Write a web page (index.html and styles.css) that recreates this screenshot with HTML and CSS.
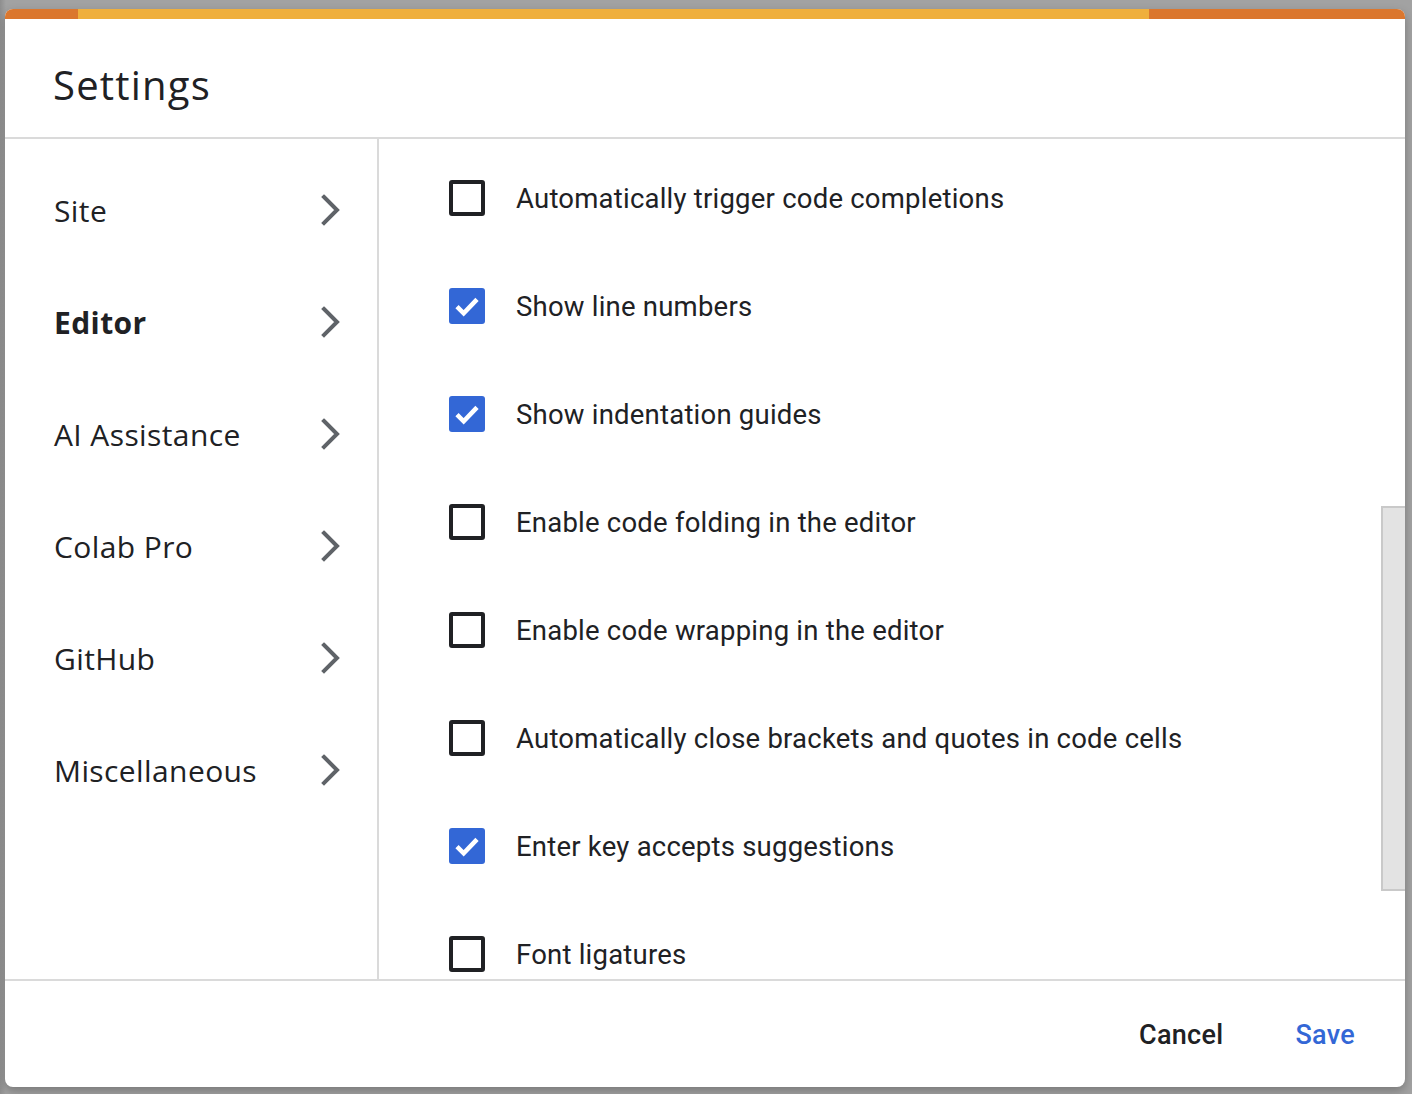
FILE: index.html
```html
<!DOCTYPE html>
<html lang="en">
<head>
<meta charset="utf-8">
<title>Settings</title>
<link rel="stylesheet" href="styles.css">
</head>
<body>
<div class="dialog">
  <div class="topbar">
    <span class="seg seg-a"></span>
    <span class="seg seg-b"></span>
    <span class="seg seg-c"></span>
  </div>
  <header class="head"><h1 class="title">Settings</h1></header>
  <div class="main">
    <nav class="side">
      <div class="nav-item"><span>Site</span><svg class="chev" viewBox="0 0 20 32"><polyline points="3,3 16,16 3,29"/></svg></div>
      <div class="nav-item active"><span>Editor</span><svg class="chev" viewBox="0 0 20 32"><polyline points="3,3 16,16 3,29"/></svg></div>
      <div class="nav-item"><span>AI Assistance</span><svg class="chev" viewBox="0 0 20 32"><polyline points="3,3 16,16 3,29"/></svg></div>
      <div class="nav-item"><span>Colab Pro</span><svg class="chev" viewBox="0 0 20 32"><polyline points="3,3 16,16 3,29"/></svg></div>
      <div class="nav-item"><span>GitHub</span><svg class="chev" viewBox="0 0 20 32"><polyline points="3,3 16,16 3,29"/></svg></div>
      <div class="nav-item"><span>Miscellaneous</span><svg class="chev" viewBox="0 0 20 32"><polyline points="3,3 16,16 3,29"/></svg></div>
    </nav>
    <section class="content">
      <div class="list">
        <div class="row"><span class="box"></span><span class="label">Automatically trigger code completions</span></div>
        <div class="row"><span class="box checked"><svg viewBox="0 0 24 24"><path d="M4.5 12.5l5 5L19.5 7"/></svg></span><span class="label">Show line numbers</span></div>
        <div class="row"><span class="box checked"><svg viewBox="0 0 24 24"><path d="M4.5 12.5l5 5L19.5 7"/></svg></span><span class="label">Show indentation guides</span></div>
        <div class="row"><span class="box"></span><span class="label">Enable code folding in the editor</span></div>
        <div class="row"><span class="box"></span><span class="label">Enable code wrapping in the editor</span></div>
        <div class="row"><span class="box"></span><span class="label">Automatically close brackets and quotes in code cells</span></div>
        <div class="row"><span class="box checked"><svg viewBox="0 0 24 24"><path d="M4.5 12.5l5 5L19.5 7"/></svg></span><span class="label">Enter key accepts suggestions</span></div>
        <div class="row"><span class="box"></span><span class="label">Font ligatures</span></div>
      </div>
      <div class="track"><div class="thumb"></div></div>
    </section>
  </div>
  <footer class="foot">
    <button class="btn cancel">Cancel</button>
    <button class="btn save">Save</button>
  </footer>
</div>
</body>
</html>
```
FILE: styles.css
```css
html, body {
  margin: 0;
  height: 100%;
}
body {
  background: linear-gradient(90deg, #8e8e8e 0, #a2a2a2 6px, #a2a2a2 100%);
  padding: 9px 0 0 5px;
  box-sizing: border-box;
  overflow: hidden;
  font-family: Roboto, "Liberation Sans", sans-serif;
  color: #202124;
}
.dialog {
  width: 1400px;
  height: 1078px;
  background: #fff;
  border-radius: 8px;
  overflow: hidden;
  display: flex;
  flex-direction: column;
  box-shadow: 0 4px 10px rgba(0,0,0,0.25);
}
.topbar {
  display: flex;
  height: 10px;
  flex: none;
}
.seg { display: block; height: 100%; }
.seg-a { width: 73px; background: #db772e; }
.seg-b { flex: 1; background: #efaf3d; }
.seg-c { width: 256px; background: #db772e; }

.head {
  height: 120px;
  flex: none;
  border-bottom: 2px solid #dadada;
  box-sizing: border-box;
  display: flex;
  align-items: center;
  padding: 0 0 0 48px;
}
.title {
  margin: 0;
  font-family: "Open Sans", sans-serif;
  font-weight: 400;
  font-size: 40px;
  letter-spacing: 1.2px;
  color: #202124;
  position: relative;
  top: 6px;
}
.main {
  flex: 1;
  display: flex;
  min-height: 0;
}
.side {
  width: 374px;
  flex: none;
  border-right: 2px solid #dadada;
  box-sizing: border-box;
  padding-top: 15px;
}
.nav-item {
  height: 112px;
  display: flex;
  align-items: center;
  justify-content: space-between;
  padding: 0 36px 0 49px;
  font-family: "Open Sans", sans-serif;
  font-size: 30px;
  letter-spacing: 0.4px;
  color: #202124;
}
.nav-item.active span { font-weight: 700; }
.chev {
  width: 20px;
  height: 32px;
  fill: none;
  stroke: #5f6368;
  stroke-width: 4;
  stroke-linecap: square;
}
.content {
  flex: 1;
  display: flex;
  overflow: hidden;
}
.list {
  flex: 1;
  padding: 5px 0 0 70px;
}
.row {
  height: 108px;
  display: flex;
  align-items: center;
}
.box {
  width: 36px;
  height: 36px;
  box-sizing: border-box;
  border: 4px solid #202124;
  border-radius: 3px;
  flex: none;
  display: flex;
  align-items: center;
  justify-content: center;
}
.box.checked {
  background: #3367d6;
  border: none;
}
.box svg {
  width: 32px;
  height: 32px;
  fill: none;
  stroke: #fff;
  stroke-width: 3.4;
}
.label {
  margin-left: 31px;
  font-size: 27.5px;
  color: #202124;
  letter-spacing: 0.22px;
}
.track {
  width: 24px;
  flex: none;
}
.thumb {
  margin-top: 367px;
  height: 385px;
  background: #e3e3e3;
  border: 2px solid #c9c9c9;
  border-right: none;
  box-sizing: border-box;
}
.foot {
  height: 108px;
  flex: none;
  border-top: 2px solid #dadada;
  box-sizing: border-box;
  display: flex;
  align-items: center;
  justify-content: flex-end;
  padding: 2px 50px 0 0;
  gap: 72px;
}
.btn {
  background: none;
  border: none;
  padding: 0;
  font-family: Roboto, sans-serif;
  font-weight: 500;
  font-size: 27px;
  letter-spacing: 0.3px;
  cursor: pointer;
}
.cancel { color: #202124; }
.save { color: #3367d6; }
```
